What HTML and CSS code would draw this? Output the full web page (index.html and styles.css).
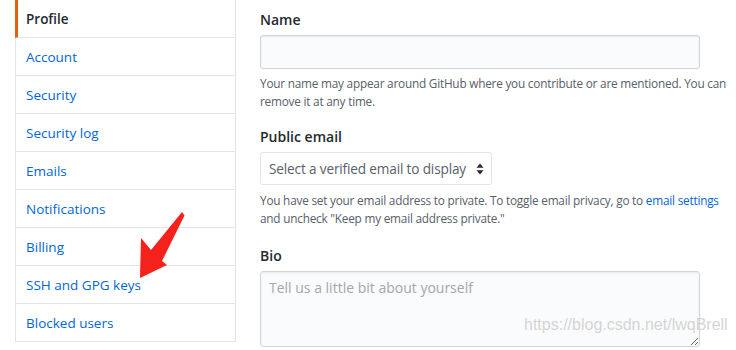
FILE: index.html
```html
<!DOCTYPE html>
<html lang="en">
<head>
    <meta charset="UTF-8">
    <meta name="viewport" content="width=device-width, initial-scale=1.0">
    <title>Public profile</title>
    <link rel="stylesheet" href="styles.css">
</head>
<body>
    <div class="layout">
        <nav class="menu">
            <a href="#" class="menu-item selected">Profile</a>
            <a href="#" class="menu-item">Account</a>
            <a href="#" class="menu-item">Security</a>
            <a href="#" class="menu-item">Security log</a>
            <a href="#" class="menu-item">Emails</a>
            <a href="#" class="menu-item">Notifications</a>
            <a href="#" class="menu-item">Billing</a>
            <a href="#" class="menu-item">SSH and GPG keys</a>
            <a href="#" class="menu-item">Blocked users</a>
        </nav>

        <main class="settings">
            <div class="form-group">
                <label for="name">Name</label>
                <input type="text" id="name" class="form-control name-input">
                <p class="note">Your name may appear around GitHub where you contribute or are mentioned. You can remove it at any time.</p>
            </div>

            <div class="form-group email-group">
                <label for="email">Public email</label>
                <div class="select-wrap">
                    <select id="email" class="form-select">
                        <option>Select a verified email to display</option>
                    </select>
                    <svg class="select-arrow" width="8" height="12" viewBox="0 0 8 12">
                        <path d="M4 0.5 L7.5 4.8 H0.5 Z M4 11.5 L7.5 7.2 H0.5 Z" fill="#24292e"/>
                    </svg>
                </div>
                <p class="note">You have set your email address to private. To toggle email privacy, go to <a href="#">email settings</a> and uncheck "Keep my email address private."</p>
            </div>

            <div class="form-group">
                <label for="bio">Bio</label>
                <textarea id="bio" class="form-control bio-input" placeholder="Tell us a little bit about yourself"></textarea>
            </div>
        </main>
    </div>

    <!-- annotation over the screenshot -->
    <svg class="arrow" width="60" height="80" viewBox="0 0 60 80">
        <path d="M47 4 L49.5 7.5 L27 53 L32 57 L5 70 L6 30 L16 42 Z" fill="#f5221b"/>
    </svg>
    <div class="watermark">https://blog.csdn.net/lwqBrell</div>
</body>
</html>
```

FILE: styles.css
```css
* {
    margin: 0;
    padding: 0;
    box-sizing: border-box;
}

body {
    font-family: 'Open Sans', 'Noto Sans', sans-serif;
    font-size: 14px;
    color: #24292e;
    background: #fff;
    overflow: hidden;
}

a {
    color: #0366d6;
    text-decoration: none;
}

.layout {
    display: flex;
    align-items: flex-start;
    padding-left: 15px;
}

.menu {
    width: 221px;
    flex-shrink: 0;
    border-left: 1px solid #e1e4e8;
    border-right: 1px solid #e1e4e8;
}

.menu-item {
    display: block;
    height: 38px;
    padding: 1px 0 0 10px;
    line-height: 36px;
    border-bottom: 1px solid #e1e4e8;
    font-size: 13.5px;
}

.menu-item.selected {
    margin-left: -1px;
    padding-left: 8px;
    border-left: 3px solid #e36209;
    color: #24292e;
    font-weight: 600;
}

.settings {
    flex: 1;
    padding: 10px 0 0 24px;
}

.form-group {
    margin-bottom: 17px;
}

.email-group {
    margin-bottom: 19px;
}

.form-group label {
    display: block;
    line-height: 20px;
    font-weight: 600;
    margin-bottom: 5px;
}

.form-control {
    display: block;
    width: 440px;
    background: #fafbfc;
    border: 1px solid #d1d5da;
    border-radius: 3px;
    font-family: inherit;
    font-size: 14px;
    color: #24292e;
    box-shadow: inset 0 1px 2px rgba(27,31,35,0.075);
}

.name-input {
    height: 34px;
    margin-top: 2px;
}

.bio-input {
    height: 76px;
    padding: 6px 8px;
    line-height: 20px;
}

.bio-input::placeholder {
    color: #a3a8ad;
}

.select-wrap {
    position: relative;
    width: 232px;
}

.form-select {
    display: block;
    width: 100%;
    height: 33px;
    padding: 0 22px 0 8px;
    appearance: none;
    background: #fff;
    border: 1px solid #e1e4e8;
    border-radius: 3px;
    font-family: inherit;
    font-size: 13.6px;
    letter-spacing: -0.15px;
    color: #586069;
}

.select-arrow {
    position: absolute;
    right: 8px;
    top: 11px;
}

.note {
    margin-top: 5px;
    font-size: 11.8px;
    letter-spacing: -0.22px;
    line-height: 18px;
    color: #586069;
    max-width: 468px;
}

.email-group .note {
    margin-top: 6px;
}

.arrow {
    position: absolute;
    left: 135px;
    top: 208px;
}

.watermark {
    position: absolute;
    left: 524px;
    top: 316px;
    font-family: 'Liberation Sans', Arial, sans-serif;
    font-size: 16px;
    color: rgba(205, 205, 205, 0.85);
}
```
